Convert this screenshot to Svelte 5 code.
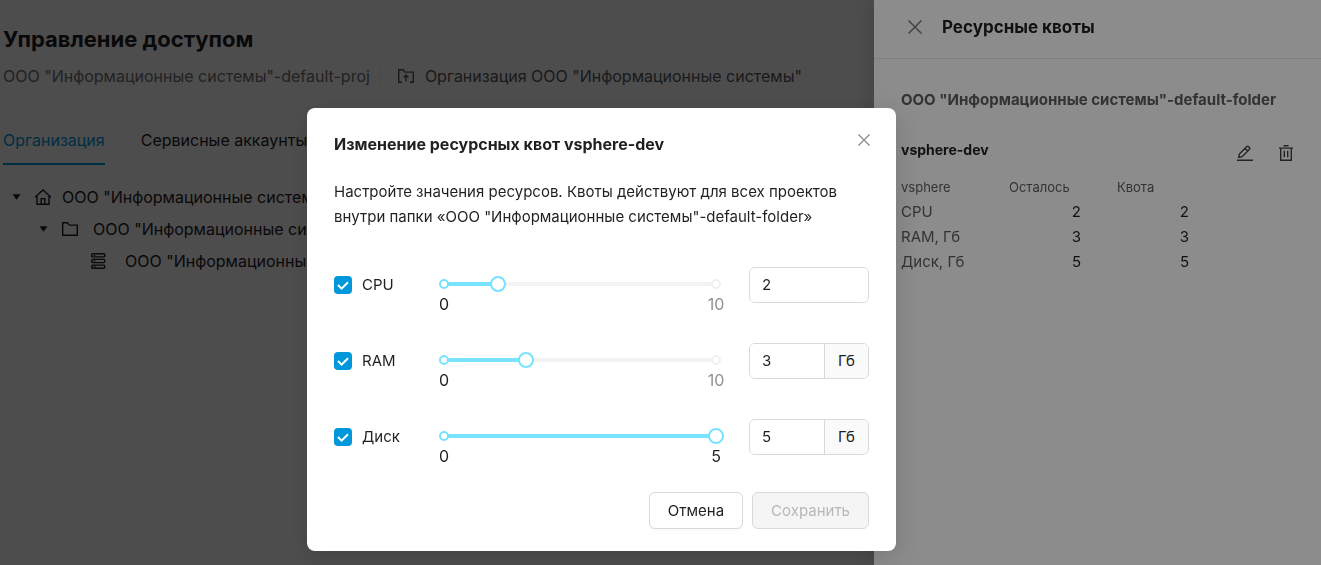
<script>
  let resources = $state([
    { id: 'cpu', label: 'CPU', value: 2, max: 10, unit: '' },
    { id: 'ram', label: 'RAM', value: 3, max: 10, unit: 'Гб' },
    { id: 'disk', label: 'Диск', value: 5, max: 5, unit: 'Гб' }
  ]);

  const quotas = [
    { name: 'CPU', left: 2, quota: 2 },
    { name: 'RAM, Гб', left: 3, quota: 3 },
    { name: 'Диск, Гб', left: 5, quota: 5 }
  ];

  const org = 'ООО "Информационные системы"';
</script>

<main class="page">
  <h1>Управление доступом</h1>
  <nav class="crumbs">
    <a href="#project">{org}-default-proj</a>
    <span class="divider"></span>
    <a href="#org" class="strong">
      <svg width="18" height="16" viewBox="0 0 18 16" fill="none" stroke="currentColor" stroke-width="1.4">
        <path d="M5 14.3H1.7V1.7h4.3l2 2.4h8.3v10.2H13" />
        <path d="M9 13.5V7.2M6.6 9.4 9 7l2.4 2.4" />
      </svg>
      Организация {org}
    </a>
  </nav>
  <div class="tabs">
    <button class="tab active">Организация</button>
    <button class="tab">Сервисные аккаунты</button>
  </div>
  <ul class="tree">
    <li>
      <svg class="caret" width="9" height="6" viewBox="0 0 9 6"><path d="M.5.3h8L4.5 5.8z" fill="currentColor" /></svg>
      <svg class="ico" width="18" height="16" viewBox="0 0 18 16" fill="none" stroke="currentColor" stroke-width="1.4">
        <path d="M1 8.2 9 1l8 7.2M3 7v8.2h12V7M7.2 15V9.6h3.6V15" />
      </svg>
      <span>{org}</span>
    </li>
    <li class="level-2">
      <svg class="caret" width="9" height="6" viewBox="0 0 9 6"><path d="M.5.3h8L4.5 5.8z" fill="currentColor" /></svg>
      <svg class="ico" width="18" height="16" viewBox="0 0 18 16" fill="none" stroke="currentColor" stroke-width="1.4">
        <path d="M1.7 1.7h4.6l2 2.4h8v10.2H1.7z" />
      </svg>
      <span>{org}-default-folder</span>
    </li>
    <li class="level-3">
      <svg class="ico" width="18" height="16" viewBox="0 0 18 16" fill="none" stroke="currentColor" stroke-width="1.4">
        <rect x="2.7" y=".7" width="13" height="3.2" rx="1" /><rect x="2.7" y="6.4" width="13" height="3.2" rx="1" /><rect x="2.7" y="12.1" width="13" height="3.2" rx="1" />
        <path d="M4.5 2.3h2M4.5 8h2M4.5 13.7h2" stroke-width="1" />
      </svg>
      <span>{org}-default-proj</span>
    </li>
  </ul>
</main>

<div class="mask"></div>
<aside class="drawer">
  <header>
    <button class="icon-button" aria-label="Закрыть панель">
      <svg width="14" height="14" viewBox="0 0 14 14" fill="none" stroke="currentColor" stroke-width="1.5"><path d="m.5.5 13 13m0-13-13 13" /></svg>
    </button>
    <h2>Ресурсные квоты</h2>
  </header>
  <div class="drawer-body">
    <h3>{org}-default-folder</h3>
    <div class="quota-head">
      <h4>vsphere-dev</h4>
      <div class="actions">
        <button class="icon-button dark" aria-label="Изменить">
          <svg width="16" height="16" viewBox="0 0 16 16" fill="none" stroke="currentColor" stroke-width="1.4">
            <path d="M0 15.3h16M1.7 12.4l.7-3.4 7.4-7.5c.5-.5 1-.5 1.5 0l1.2 1.2c.5.5.5 1 0 1.5l-7.4 7.5zM8 3.4l2.7 2.7" />
          </svg>
        </button>
        <button class="icon-button dark" aria-label="Удалить">
          <svg width="16" height="16" viewBox="0 0 16 16" fill="none" stroke="currentColor" stroke-width="1.4">
            <path d="M1 3.1h14M5.5.7h5M2.7 3.1v12.2h10.6V3.1M6.3 5.8v6.4M9.7 5.8v6.4" />
          </svg>
        </button>
      </div>
    </div>
    <table>
      <thead><tr><th>vsphere</th><th>Осталось</th><th>Квота</th></tr></thead>
      <tbody>
        {#each quotas as q}
          <tr><td>{q.name}</td><td class="num">{q.left}</td><td class="num">{q.quota}</td></tr>
        {/each}
      </tbody>
    </table>
  </div>
</aside>

<div class="mask modal-layer">
  <div class="modal" role="dialog" aria-modal="true" aria-labelledby="modal-title">
    <header class="modal-head">
      <h2 id="modal-title">Изменение ресурсных квот vsphere-dev</h2>
      <button class="icon-button" aria-label="Закрыть">
        <svg width="12" height="12" viewBox="0 0 12 12" fill="none" stroke="currentColor" stroke-width="1.3"><path d="m.4.4 11.2 11.2m0-11.2L.4 11.6" /></svg>
      </button>
    </header>
    <p>Настройте значения ресурсов. Квоты действуют для всех проектов внутри папки «{org}-default-folder»</p>
    <div class="rows">
      {#each resources as r (r.id)}
        <div class="row">
          <label class="check">
            <span class="box">
              <input type="checkbox" checked />
              <svg width="12" height="9" viewBox="0 0 12 9" fill="none" stroke="#fff" stroke-width="2"><path d="m1 4 3.6 3.6L11 1.2" /></svg>
            </span>
            {r.label}
          </label>
          <div class="slider">
            <div class="rail">
              <div class="fill" style="width: {(r.value / r.max) * 100}%"></div>
              <i class="dot on"></i>
              <i class="dot end" class:on={r.value === r.max}></i>
              <input type="range" min="0" max={r.max} bind:value={r.value} aria-label={r.label} />
            </div>
            <div class="marks"><span>0</span><span class:muted={r.value < r.max}>{r.max}</span></div>
          </div>
          <div class="field">
            <input type="text" bind:value={r.value} aria-label="{r.label}, значение" />
            {#if r.unit}<span>{r.unit}</span>{/if}
          </div>
        </div>
      {/each}
    </div>
    <footer>
      <button class="btn">Отмена</button>
      <button class="btn" disabled>Сохранить</button>
    </footer>
  </div>
</div>

<style>
  :global(body) {
    overflow: hidden;
    background: #fff;
    color: #1f2022;
    font: 15px/24px Inter, "Liberation Sans", sans-serif;
  }
  h1, h2, h3, h4, p, ul { margin: 0; padding: 0; }
  button, input { font: inherit; color: inherit; }
  button { cursor: pointer; }
  svg { display: block; flex: none; }

  .page { padding: 23px 3px; font-size: 16px; }
  h1 { font-size: 22px; line-height: 32px; }
  .crumbs { display: flex; align-items: center; margin-top: 9px; white-space: nowrap; }
  .crumbs a { display: flex; align-items: center; gap: 10px; color: #707274; text-decoration: none; }
  .crumbs .strong { color: #55575a; }
  .divider { width: 1px; height: 16px; margin: 0 17px 0 9px; background: #eaeaea; }
  .tabs { display: flex; gap: 36px; margin-top: 40px; }
  .tab { padding: 0 0 11px; border: 0; border-bottom: 2px solid transparent; background: none; }
  .tab.active { border-color: #0097db; color: #0097db; }
  .tree { display: flex; flex-direction: column; gap: 8px; margin-top: 20px; list-style: none; white-space: nowrap; }
  .tree li { display: flex; align-items: center; padding-left: 9px; }
  .tree .level-2 { padding-left: 36px; }
  .tree .level-3 { padding-left: 86px; }
  .caret { margin-right: 13px; }
  .ico { margin-right: 10px; }
  .level-2 .ico { margin-right: 14px; }
  .level-3 .ico { margin-right: 18px; }

  .mask { position: fixed; inset: 0; background: rgba(0, 0, 0, 0.45); }
  .drawer {
    position: fixed; inset: 0 0 0 auto; width: 447px;
    background: #fff; box-shadow: -6px 0 24px rgba(0, 0, 0, 0.12);
  }
  .drawer header { display: flex; align-items: center; gap: 20px; padding: 14px 34px 18px; border-bottom: 1px solid #e8e8e8; line-height: 26px; }
  .drawer h2 { font-size: 17px; }
  .icon-button { display: block; padding: 0; border: 0; background: none; color: #8a8c8e; }
  .drawer header .icon-button { color: #77797b; }
  .icon-button.dark { color: #3f4144; }
  .drawer-body { padding: 29px 27px; }
  h3 { font-size: 15px; color: #5c5e61; }
  .quota-head { display: flex; align-items: center; justify-content: space-between; margin-top: 26px; }
  h4 { font-size: 14px; line-height: 24px; }
  .actions { display: flex; gap: 25px; margin-top: 6px; }
  table { border-collapse: collapse; margin-top: 13px; }
  th { padding: 0; text-align: left; font-size: 13px; font-weight: 400; color: #5c5e61; line-height: 24px; width: 108px; }
  td { padding: 0; line-height: 25px; color: #5c5e61; }
  .num { padding-right: 36px; text-align: right; color: #1f2022; }

  .modal-layer { display: flex; justify-content: center; align-items: flex-start; padding: 108px 118px 0 0; }
  .modal {
    width: 535px; padding: 24px 27px 22px; border-radius: 8px; background: #fff;
    box-shadow: 0 6px 24px rgba(0, 0, 0, 0.15);
  }
  .modal-head { display: flex; justify-content: space-between; align-items: flex-start; margin-right: -1px; }
  .modal-head h2 { font-size: 16px; }
  .modal-head .icon-button { margin-top: 2px; }
  p { margin-top: 23px; line-height: 25px; }
  .rows { display: flex; flex-direction: column; gap: 40px; margin-top: 38px; }
  .row { display: grid; grid-template-columns: 102px 1fr 120px; align-items: start; height: 36px; }
  .check { display: flex; align-items: center; gap: 10px; height: 36px; }
  .box { display: grid; place-items: center; }
  .box > * { grid-area: 1 / 1; }
  .box svg { pointer-events: none; }
  .box input { width: 18px; height: 18px; margin: 0; border: 1px solid #c8c8c8; border-radius: 4px; appearance: none; }
  .box input:checked { border: 0; background: #0097db; }
  .slider { padding: 15px 33px 0 8px; }
  .rail { position: relative; height: 4px; background: #f3f3f3; }
  .fill { height: 4px; background: #77e3ff; }
  .dot { position: absolute; top: -3px; left: -5px; box-sizing: border-box; width: 10px; height: 10px; border: 2px solid #f0f0f0; border-radius: 50%; background: #fff; }
  .dot.end { right: -5px; left: auto; }
  .dot.on { border-color: #77e3ff; }
  .rail input { position: absolute; top: -6px; left: -8px; width: calc(100% + 16px); height: 16px; margin: 0; background: none; appearance: none; }
  .rail input::-webkit-slider-thumb { box-sizing: border-box; width: 16px; height: 16px; border: 2px solid #77e3ff; border-radius: 50%; background: #fff; appearance: none; }
  .marks { display: flex; justify-content: space-between; margin: 6px -9px 0 -5px; font-size: 16px; }
  .marks span:last-child { min-width: 18px; text-align: center; }
  .muted { color: #8f9193; }
  .field { display: flex; box-sizing: border-box; height: 36px; border: 1px solid #d9d9d9; border-radius: 6px; overflow: hidden; }
  .field input { flex: 1; min-width: 0; padding: 0 12px; border: 0; outline: 0; background: #fff; }
  .field span { padding: 5px 13px; border-left: 1px solid #d9d9d9; background: #fafafa; }
  footer { display: flex; justify-content: flex-end; gap: 9px; margin-top: 37px; }
  .btn { padding: 6px 18px; border: 1px solid #d9d9d9; border-radius: 6px; background: #fff; box-shadow: 0 2px 0 rgba(0, 0, 0, 0.02); line-height: 23px; }
  .btn:disabled { background: #f5f5f5; color: #b8b8b8; box-shadow: none; cursor: default; }
</style>
